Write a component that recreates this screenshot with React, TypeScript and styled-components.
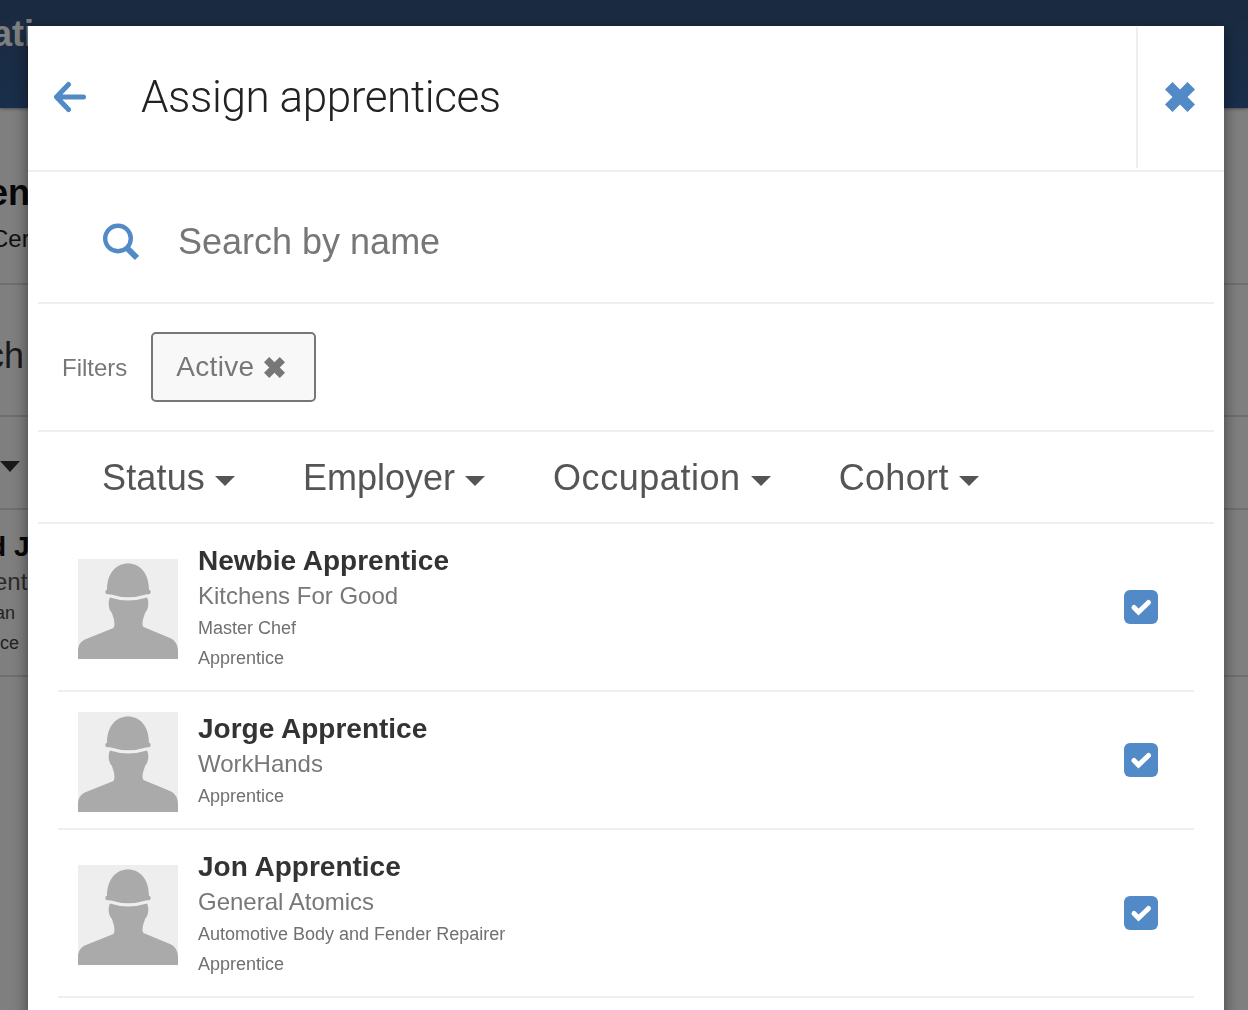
import React from 'react';
import styled, { createGlobalStyle } from 'styled-components';

const SANS = '"Liberation Sans", Arial, sans-serif';
const BLUE = '#5289c7';

const GlobalStyle = createGlobalStyle`
  html, body {
    margin: 0;
    padding: 0;
    height: 100%;
    background: #fff;
    font-family: ${SANS};
  }
  * { box-sizing: border-box; }
`;

// ===== PAGE BEHIND THE MODAL =====
const Page = styled.div`
  height: 1010px;
  overflow: hidden;
  background: #fff;
`;

const NavBar = styled.div`
  height: 108px;
  padding-top: 12px;
  background: linear-gradient(#35557f, #335d97);
  box-shadow: 0 1px 3px rgba(0, 0, 0, 0.4);
`;

const NavTitle = styled.div`
  margin-left: -8px;
  font-size: 36px;
  line-height: 44px;
  font-weight: 700;
  color: #fff;
`;

const PageSection = styled.div<{ $height: number }>`
  height: ${p => p.$height}px;
  border-bottom: 2px solid #ddd;
  overflow: hidden;
`;

const Clipped = styled.div<{ $shift: number; $size: number; $line: number; $bold?: boolean; $color?: string; $top?: number }>`
  margin-left: ${p => p.$shift}px;
  margin-top: ${p => p.$top ?? 0}px;
  font-size: ${p => p.$size}px;
  line-height: ${p => p.$line}px;
  font-weight: ${p => (p.$bold ? 700 : 400)};
  color: ${p => p.$color ?? '#333'};
  white-space: nowrap;
`;

const PageCaret = styled.div`
  width: 0;
  height: 0;
  margin-top: 44px;
  border-left: 10px solid transparent;
  border-right: 10px solid transparent;
  border-top: 11px solid #333;
`;

// ===== MODAL =====
const Overlay = styled.div`
  position: fixed;
  inset: 0;
  display: flex;
  padding: 26px 24px 0 28px;
  background: rgba(0, 0, 0, 0.5);
`;

const Modal = styled.div`
  flex: 1;
  height: 1100px;
  background: #fff;
  box-shadow: 0 5px 15px rgba(0, 0, 0, 0.5);
`;

const Header = styled.div`
  display: flex;
  align-items: stretch;
  height: 146px;
  border-bottom: 2px solid #eee;
`;

const BackButton = styled.button`
  width: 113px;
  padding: 0 0 2px 25px;
  display: flex;
  align-items: center;
  border: none;
  background: none;
`;

const Title = styled.h2`
  flex: 1;
  margin: 0;
  font-family: Roboto, ${SANS};
  font-size: 44px;
  line-height: 142px;
  letter-spacing: -0.4px;
  font-weight: 300;
  color: #222;
`;

const CloseButton = styled.button`
  width: 88px;
  margin: 1px 0 2px;
  display: flex;
  align-items: center;
  justify-content: center;
  padding: 0 2px 1px 0;
  border: none;
  border-left: 2px solid #eee;
  background: none;
`;

const SearchBar = styled.div`
  display: flex;
  align-items: center;
  gap: 39px;
  height: 132px;
  margin: 0 10px;
  padding: 10px 0 0 65px;
  border-bottom: 2px solid #eee;
`;

const SearchInput = styled.input`
  flex: 1;
  border: none;
  outline: none;
  padding: 0;
  font-family: ${SANS};
  font-size: 36px;
  line-height: 44px;
  color: #555;

  &::placeholder {
    color: #777;
    opacity: 1;
  }
`;

const FilterBar = styled.div`
  display: flex;
  align-items: center;
  gap: 24px;
  height: 128px;
  margin: 0 10px;
  padding-left: 24px;
  border-bottom: 2px solid #eee;
`;

const FilterLabel = styled.span`
  padding-top: 2px;
  font-size: 24px;
  color: #777;
`;

const Chip = styled.div`
  display: flex;
  align-items: center;
  gap: 10px;
  width: 165px;
  height: 70px;
  padding-left: 23px;
  border: 2px solid #777;
  border-radius: 5px;
  background: #f8f8f8;
  font-size: 28px;
  letter-spacing: 0.3px;
  color: #777;
`;

const DropdownBar = styled.div`
  display: flex;
  align-items: center;
  height: 92px;
  margin: 0 10px;
  padding: 2px 0 0 64px;
  gap: 68px;
  border-bottom: 2px solid #eee;
`;

const Dropdown = styled.div<{ $spacing: number }>`
  display: flex;
  align-items: center;
  gap: 10px;
  font-size: 36px;
  line-height: 44px;
  letter-spacing: ${p => p.$spacing}px;
  color: #555;
`;

const Caret = styled.span`
  width: 0;
  height: 0;
  margin-top: 5px;
  border-left: 10px solid transparent;
  border-right: 10px solid transparent;
  border-top: 10px solid #555;
`;

// ===== LIST =====
const List = styled.div`
  margin: 0 30px;
`;

const Row = styled.div`
  display: flex;
  align-items: center;
  padding: 19px 36px 17px 20px;
  border-bottom: 2px solid #eee;
`;

const Avatar = styled.svg`
  flex: none;
  width: 100px;
  height: 100px;
  margin: 1px 20px -1px 0;
  display: block;
`;

const Info = styled.div`
  flex: 1;
`;

const Name = styled.div`
  margin-top: 1px;
  font-size: 28px;
  line-height: 34px;
  font-weight: 700;
  color: #333;
`;

const Company = styled.div`
  margin: 1px 0;
  font-size: 24px;
  line-height: 33px;
  color: #777;
`;

const Detail = styled.div`
  font-size: 18px;
  line-height: 30px;
  color: #707070;
`;

const CheckBox = styled.div`
  flex: none;
  width: 34px;
  height: 34px;
  margin-bottom: 2px;
  border-radius: 6px;
  background: ${BLUE};
  display: flex;
  align-items: center;
  justify-content: center;
`;

// ===== ICONS =====
const BackIcon = () => (
  <svg width="34" height="32" viewBox="0 0 34 32" fill="none" stroke={BLUE} strokeWidth="5" strokeLinecap="round" strokeLinejoin="round">
    <path d="M30.5 16H5M15.5 3.5L3.5 16L15.5 28.5" />
  </svg>
);

const CrossIcon = ({ size, color }: { size: number; color: string }) => (
  <svg width={size} height={size} viewBox="0 0 30 30">
    <path fill={color} d="M7.5 0L15 7.5L22.5 0L30 7.5L22.5 15L30 22.5L22.5 30L15 22.5L7.5 30L0 22.5L7.5 15L0 7.5Z" />
  </svg>
);

const SearchIcon = () => (
  <svg width="36" height="38" viewBox="0 0 36 38" fill="none" stroke={BLUE}>
    <circle cx="15" cy="15.5" r="12.8" strokeWidth="4.4" />
    <path d="M24 25L34 35" strokeWidth="6" />
  </svg>
);

const CheckIcon = () => (
  <svg width="34" height="34" viewBox="0 0 34 34" fill="none" stroke="#fff" strokeWidth="5" strokeLinecap="round" strokeLinejoin="miter">
    <path d="M10 17.5L14.5 22L24.5 12.5" />
  </svg>
);

const WorkerAvatar = () => (
  <Avatar viewBox="0 0 100 100">
    <rect width="100" height="100" fill="#eee" />
    <path fill="#aaa" d="M29 31C29 14 38 4.5 50 4.5C62 4.5 71 14 71 31L72 31Q73.5 33 72 35L68 35.5Q50 41 33 35.5L28 35Q26.5 33 28 31Z" />
    <path fill="#aaa" d="M32 38.5Q50 44.5 69 38.5C71 42 71 50 67 54C66 58 64.5 60 64.5 66L65.5 68L92 79C97 81 100 86 100 92L100 100L0 100L0 92C0 86 3 82 8 80L35.5 69L36.5 66C36.5 60 35 58 34 54C30 50 30 42 32 38.5Z" />
  </Avatar>
);

// ===== DATA =====
const FILTERS = [
  { label: 'Status', spacing: 0.15 },
  { label: 'Employer', spacing: 0 },
  { label: 'Occupation', spacing: 0.55 },
  { label: 'Cohort', spacing: 0.35 },
];

const APPRENTICES = [
  { name: 'Newbie Apprentice', company: 'Kitchens For Good', details: ['Master Chef', 'Apprentice'] },
  { name: 'Jorge Apprentice', company: 'WorkHands', details: ['Apprentice'] },
  { name: 'Jon Apprentice', company: 'General Atomics', details: ['Automotive Body and Fender Repairer', 'Apprentice'] },
];

export default function App() {
  return (
    <>
      <GlobalStyle />
      <Page>
        <NavBar>
          <NavTitle>ati</NavTitle>
        </NavBar>
        <PageSection $height={177}>
          <Clipped $shift={-12} $size={36} $line={44} $bold $color="#111" $top={63}>ent</Clipped>
          <Clipped $shift={-9} $size={24} $line={32} $color="#222" $top={8}>Cer</Clipped>
        </PageSection>
        <PageSection $height={132}>
          <Clipped $shift={-14} $size={36} $line={44} $color="#333" $top={49}>ch</Clipped>
        </PageSection>
        <PageSection $height={93}>
          <PageCaret />
        </PageSection>
        <PageSection $height={167}>
          <Clipped $shift={-11} $size={28} $line={34} $bold $color="#111" $top={20}>d J</Clipped>
          <Clipped $shift={-6} $size={24} $line={32} $color="#555" $top={2}>ent</Clipped>
          <Clipped $shift={-5} $size={18} $line={30} $color="#444">an</Clipped>
          <Clipped $shift={0} $size={18} $line={30} $color="#444">ce</Clipped>
        </PageSection>
      </Page>
      <Overlay>
        <Modal>
          <Header>
            <BackButton><BackIcon /></BackButton>
            <Title>Assign apprentices</Title>
            <CloseButton><CrossIcon size={30} color={BLUE} /></CloseButton>
          </Header>
          <SearchBar>
            <SearchIcon />
            <SearchInput placeholder="Search by name" />
          </SearchBar>
          <FilterBar>
            <FilterLabel>Filters</FilterLabel>
            <Chip>Active <CrossIcon size={21} color="#777" /></Chip>
          </FilterBar>
          <DropdownBar>
            {FILTERS.map(item => (
              <Dropdown key={item.label} $spacing={item.spacing}>{item.label}<Caret /></Dropdown>
            ))}
          </DropdownBar>
          <List>
            {APPRENTICES.map(person => (
              <Row key={person.name}>
                <WorkerAvatar />
                <Info>
                  <Name>{person.name}</Name>
                  <Company>{person.company}</Company>
                  {person.details.map(line => <Detail key={line}>{line}</Detail>)}
                </Info>
                <CheckBox><CheckIcon /></CheckBox>
              </Row>
            ))}
          </List>
        </Modal>
      </Overlay>
    </>
  );
}
